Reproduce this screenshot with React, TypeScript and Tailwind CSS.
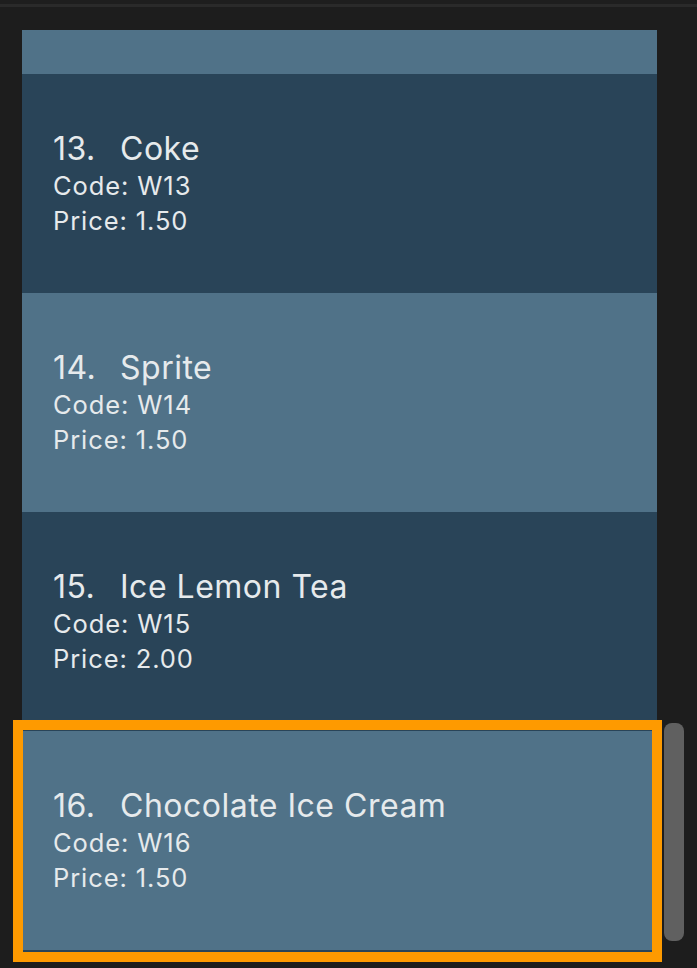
import React from "react";

type Item = { n: number; name: string; code: string; price: string; light: boolean };

const items: Item[] = [
  { n: 13, name: "Coke", code: "W13", price: "1.50", light: false },
  { n: 14, name: "Sprite", code: "W14", price: "1.50", light: true },
  { n: 15, name: "Ice Lemon Tea", code: "W15", price: "2.00", light: false },
  { n: 16, name: "Chocolate Ice Cream", code: "W16", price: "1.50", light: true },
];

function Card({ item }: { item: Item }) {
  return (
    <div
      className={
        "h-[219px] shrink-0 flex flex-col justify-center pl-[31px] text-[#e6eaec] " +
        (item.light ? "bg-[#507288]" : "bg-[#294458]")
      }
    >
      <div className="flex text-[32px] leading-[38px] tracking-[0.5px]">
        <span className="w-[67px] shrink-0">{item.n}.</span>
        <span>{item.name}</span>
      </div>
      <div className="text-[25.5px] leading-[35px] tracking-[0.9px]">Code: {item.code}</div>
      <div className="text-[25.5px] leading-[35px] tracking-[0.9px]">Price: {item.price}</div>
    </div>
  );
}

export default function App() {
  return (
    <div
      className="relative w-[697px] h-[968px] overflow-hidden bg-[#1d1d1d]"
      style={{ fontFamily: "Inter, 'Noto Sans', sans-serif" }}
    >
      <div className="h-[4px] bg-[#1e1e1e]" />
      <div className="h-[3px] bg-[#2a2a2a]" />
      <div className="flex pt-[23px] pl-[22px]">
        <div className="w-[635px] h-[922px] overflow-hidden bg-[#294458] flex flex-col">
          <div className="h-[44px] shrink-0 bg-[#507288]" />
          {items.map((it) => (
            <Card key={it.n} item={it} />
          ))}
        </div>
        <div className="flex-1 pl-[7px] pt-[693px]">
          <div className="w-[20px] h-[218px] rounded-[8px] bg-[#606060]" />
        </div>
      </div>
      <div className="absolute left-[13px] top-[720px] w-[649px] h-[242px] border-[10px] border-[#fe9a00]" />
    </div>
  );
}
